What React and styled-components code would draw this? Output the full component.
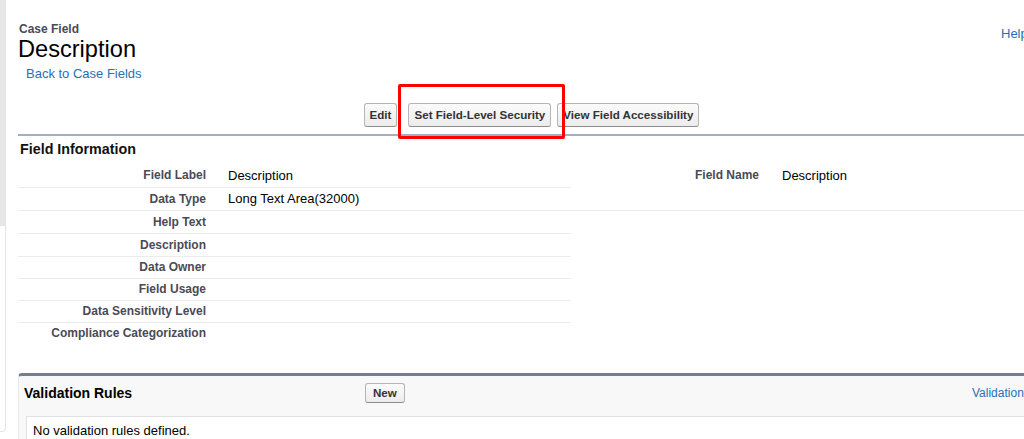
import React from "react";
import styled, { createGlobalStyle } from "styled-components";

const Global = createGlobalStyle`
  html, body { margin: 0; padding: 0; background: #fff; overflow: hidden; }
  body { font-family: "Liberation Sans", Arial, sans-serif; color: #000; }
`;

const Shell = styled.div`
  display: flex;
  align-items: flex-start;
  width: 1024px;
  height: 439px;
  overflow: hidden;
`;

const Sidebar = styled.div`
  flex: 0 0 6px;
  display: flex;
  flex-direction: column;
  height: 432px;
`;

const SideTab = styled.div`
  height: 226px;
  background: #e6e6e6;
`;

const SideRail = styled.div`
  flex: 1;
  border-right: 1px solid #e4e4e4;
  border-bottom: 1px solid #e4e4e4;
  border-bottom-right-radius: 4px;
`;

const Main = styled.div`
  flex: 0 0 1027px;
  margin-left: 12px;
  padding-top: 22px;
`;

const Header = styled.div`
  display: grid;
  grid-template-columns: 983px 44px;
`;

const TitleBlock = styled.div`
  display: flex;
  flex-direction: column;
`;

const Kicker = styled.div`
  font-size: 12px;
  line-height: 14px;
  font-weight: bold;
  color: #4a4a56;
  padding-left: 1px;
`;

const PageTitle = styled.h1`
  margin: 0;
  font-size: 23.6px;
  line-height: 26px;
  font-weight: normal;
  color: #000;
`;

const Link = styled.a`
  color: #2a6fb3;
  text-decoration: none;
  font-size: ${(p) => p.$size || 13}px;
  line-height: 16px;
  white-space: nowrap;
`;

const BackLink = styled(Link)`
  margin-top: 4px;
  padding-left: 8px;
`;

const HelpLink = styled(Link)`
  margin-top: 4px;
`;

const ButtonRow = styled.div`
  display: flex;
  justify-content: center;
  align-items: center;
  margin-top: 21px;
`;

const Btn = styled.button`
  font-family: "Liberation Sans", Arial, sans-serif;
  font-size: 11.6px;
  font-weight: bold;
  line-height: 14px;
  color: #333;
  padding: ${(p) => (p.$small ? "2px 7px" : "4px 5px")};
  margin: 0 ${(p) => p.$gapRight || 0}px 0 0;
  background: linear-gradient(#fbfbfb, #ececec);
  border: 1px solid #b5b5b5;
  border-bottom-color: #8c8c8c;
  border-radius: 3px;
  white-space: nowrap;
  cursor: pointer;
`;

const Marked = styled.span`
  position: relative;
  display: inline-flex;
  margin-right: 6px;
`;

const Highlight = styled.span`
  position: absolute;
  top: -19px;
  left: -10px;
  right: -14px;
  bottom: -12px;
  border: 3px solid #f00;
  border-radius: 2px;
  pointer-events: none;
`;

const Block = styled.section`
  margin-top: 7px;
  border-top: 2px solid #a7adc6;
`;

const SectionTitle = styled.h3`
  margin: 0;
  padding: 4px 2px 6px;
  font-size: 14.3px;
  line-height: 18px;
  font-weight: bold;
  color: #111;
`;

const DetailTable = styled.table`
  width: 100%;
  border-collapse: collapse;
  table-layout: fixed;
`;

const Cell = styled.td`
  padding: 0;
  height: ${(p) => (p.$tall ? 23 : 22)}px;
  vertical-align: middle;
  border-bottom: 1px solid ${(p) => (p.$line ? "#ececec" : "transparent")};
`;

const LabelCell = styled(Cell)`
  width: ${(p) => p.$w}px;
  text-align: right;
  padding-right: 10px;
  font-size: 12px;
  font-weight: bold;
  color: #4a4a56;
  box-sizing: border-box;
`;

const DataCell = styled(Cell)`
  width: ${(p) => (p.$w ? `${p.$w}px` : "auto")};
  padding-left: ${(p) => p.$pad || 12}px;
  font-size: 13px;
  color: #000;
  box-sizing: border-box;
`;

const ValidationBlock = styled.section`
  margin-top: 28px;
  background: #f8f8f8;
  border-top: 3px solid #747e96;
  border-left: 1px solid #eaeaea;
  border-top-left-radius: 4px;
`;

const BlockHeader = styled.div`
  display: grid;
  grid-template-columns: 346px 1fr 73px;
  align-items: center;
  padding: 7px 0 13px;
`;

const BlockTitle = styled.h2`
  margin: 0;
  padding-left: 5px;
  font-size: 14px;
  line-height: 20px;
  font-weight: bold;
  color: #000;
`;

const BlockBody = styled.div`
  margin: 0 0 0 7px;
  background: #fff;
  border: 1px solid #e0e3e5;
  border-right: none;
  padding: 6px 6px 8px;
  font-size: 13px;
  line-height: 16px;
  color: #000;
`;

const rows = [
  ["Field Label", "Description", "Field Name", "Description"],
  ["Data Type", "Long Text Area(32000)", "", ""],
  ["Help Text", ""],
  ["Description", ""],
  ["Data Owner", ""],
  ["Field Usage", ""],
  ["Data Sensitivity Level", ""],
  ["Compliance Categorization", ""],
];

export default function App() {
  return (
    <>
      <Global />
      <Shell>
        <Sidebar>
          <SideTab />
          <SideRail />
        </Sidebar>
        <Main>
          <Header>
            <TitleBlock>
              <Kicker>Case Field</Kicker>
              <PageTitle>Description</PageTitle>
              <BackLink href="#">Back to Case Fields</BackLink>
            </TitleBlock>
            <HelpLink href="#">Help for this Page</HelpLink>
          </Header>

          <ButtonRow>
            <Btn $gapRight={11}>Edit</Btn>
            <Marked>
              <Btn>Set Field-Level Security</Btn>
              <Highlight />
            </Marked>
            <Btn>View Field Accessibility</Btn>
          </ButtonRow>

          <Block>
            <SectionTitle>Field Information</SectionTitle>
            <DetailTable>
              <tbody>
                {rows.map((r, i) => {
                  const last = i === rows.length - 1;
                  const rightLine = i === 1;
                  const tall = i < 4;
                  return (
                    <tr key={r[0]}>
                      <LabelCell $w={198} $tall={tall} $line={!last}>{r[0]}</LabelCell>
                      <DataCell $w={355} $tall={tall} $line={!last}>{r[1]}</DataCell>
                      <LabelCell $w={198} $tall={tall} $line={rightLine}>{r[2] || ""}</LabelCell>
                      <DataCell $pad={13} $tall={tall} $line={rightLine}>{r[3] || ""}</DataCell>
                    </tr>
                  );
                })}
              </tbody>
            </DetailTable>
          </Block>

          <ValidationBlock>
            <BlockHeader>
              <BlockTitle>Validation Rules</BlockTitle>
              <div>
                <Btn $small>New</Btn>
              </div>
              <Link href="#" $size={12}>Validation Rules Help</Link>
            </BlockHeader>
            <BlockBody>No validation rules defined.</BlockBody>
          </ValidationBlock>
        </Main>
      </Shell>
    </>
  );
}
